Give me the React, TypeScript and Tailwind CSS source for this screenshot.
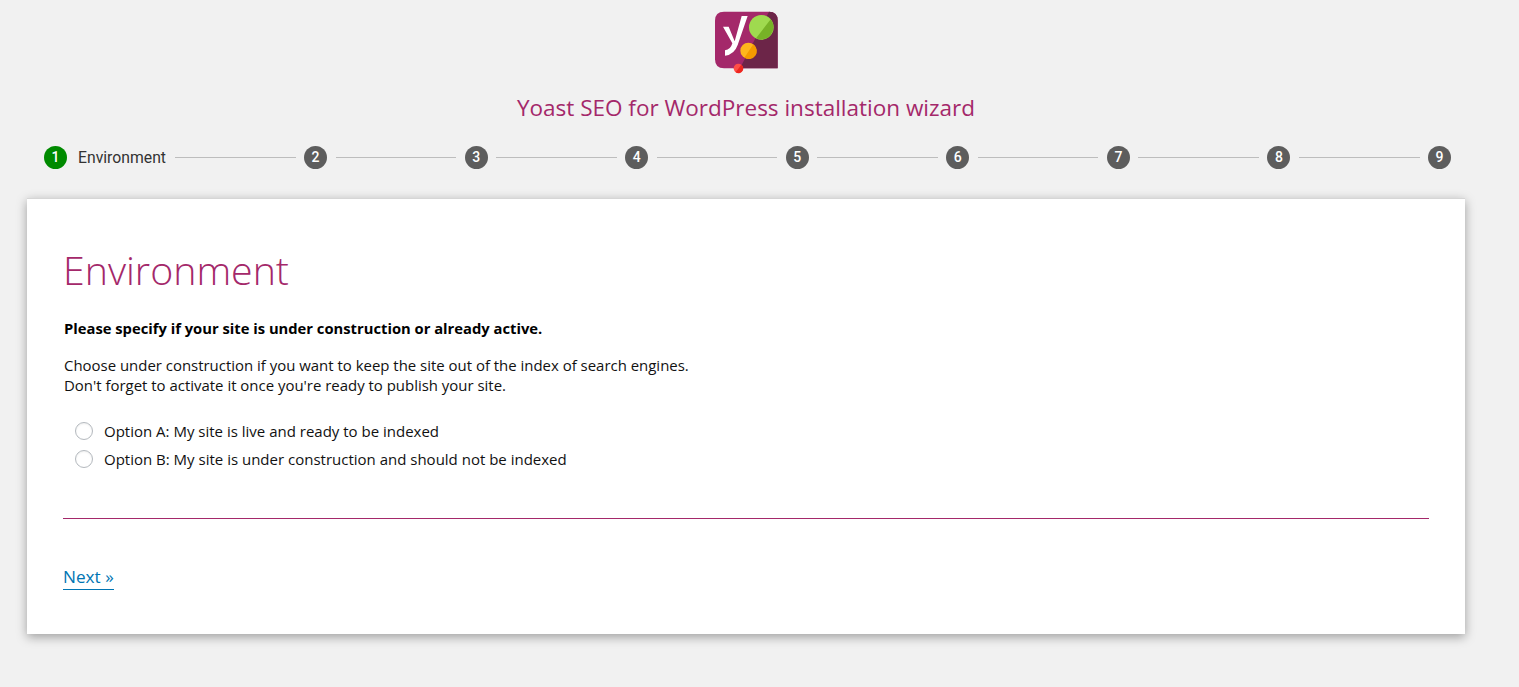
import { Fragment } from "react";

const steps = [2, 3, 4, 5, 6, 7, 8, 9];

function Logo() {
  return (
    <svg width="65" height="65" viewBox="45 30 195 195" className="block ml-[688px]">
      <path d="M72 35 H207 Q233 35 233 61 V205 H72 Q45 205 45 178 V62 Q45 35 72 35 Z" fill="#a4286a" />
      <path d="M207 35 Q233 35 233 61 V205 H120 Z" fill="#6c2548" />
      <circle cx="184" cy="82" r="37" fill="#9fda4f" />
      <path d="M212 58 A37 37 0 0 1 168 115 Z" fill="#77b227" />
      <circle cx="145" cy="152" r="24" fill="#feb61d" />
      <path d="M160 133 A24 24 0 0 1 133 173 Z" fill="#f49a00" />
      <circle cx="115" cy="205" r="14" fill="#ff4e47" />
      <path d="M124 194 A14 14 0 0 1 107 217 Z" fill="#ed261f" />
      <path
        d="M69 80 H86 L104 124 L125 48 H143 L113 135 Q103 164 75 167 V151 Q92 149 97 130 Z"
        fill="#ffffff"
      />
    </svg>
  );
}

function Stepper() {
  return (
    <div className="flex items-center h-[23px] mt-[23px] ml-[17px] w-[1407px] font-['Roboto',sans-serif]">
      <div className="w-[23px] h-[23px] rounded-full bg-[#008a00] text-white text-[14px] font-medium flex items-center justify-center">1</div>
      <span className="ml-[11px] mr-[9px] text-[15.75px] text-[#333333]">Environment</span>
      {steps.map((n) => (
        <Fragment key={n}>
          <div className="flex-1 h-px bg-[#bdbdbd]" />
          <div className="shrink-0 mx-[8.5px] last:mr-0 w-[23px] h-[23px] rounded-full bg-[#5d5d5d] text-white text-[14px] font-medium flex items-center justify-center">{n}</div>
        </Fragment>
      ))}
    </div>
  );
}

function Option({ label }: { label: string }) {
  return (
    <label className="flex items-center h-[28px] ml-[12px]">
      <span className="w-[18px] h-[18px] rounded-full border border-[#b4b9be] bg-white shadow-[inset_0_1px_2px_rgba(0,0,0,0.07)]" />
      <span className="ml-[11px] text-[15px] text-[#111111]">{label}</span>
    </label>
  );
}

export default function App() {
  return (
    <div className="min-h-[687px] bg-[#f1f1f1] overflow-hidden font-['Open_Sans',sans-serif]">
      <div className="w-[1438px] ml-[27px] pt-[10px]">
        <Logo />
        <h1 className="mt-[18px] text-center text-[22.5px] leading-[30px] text-[#a4286a]">
          Yoast SEO for WordPress installation wizard
        </h1>
        <Stepper />
        <div className="mt-[29px] h-[436px] bg-white border-t border-[#d6d6d6] shadow-[0_3px_10px_rgba(0,0,0,0.35)] px-[36px] pt-[44px]">
          <h2 className="text-[39.3px] leading-[54px] font-light text-[#a4286a]">Environment</h2>
          <p className="mt-[21px] ml-[1px] text-[14.75px] leading-[20px] font-bold text-black">
            Please specify if your site is under construction or already active.
          </p>
          <p className="mt-[17px] ml-[1px] text-[14.95px] leading-[20px] text-[#111111]">
            Choose under construction if you want to keep the site out of the index of search engines.
            <br />
            Don't forget to activate it once you're ready to publish your site.
          </p>
          <div className="mt-[22px]">
            <Option label="Option A: My site is live and ready to be indexed" />
            <Option label="Option B: My site is under construction and should not be indexed" />
          </div>
          <div className="mt-[45px] h-px bg-[#a4286a]" />
          <div className="mt-[46px]">
            <a className="inline-block text-[17.2px] leading-[24px] text-[#0075b3] border-b border-[#0075b3]">Next »</a>
          </div>
        </div>
      </div>
    </div>
  );
}
